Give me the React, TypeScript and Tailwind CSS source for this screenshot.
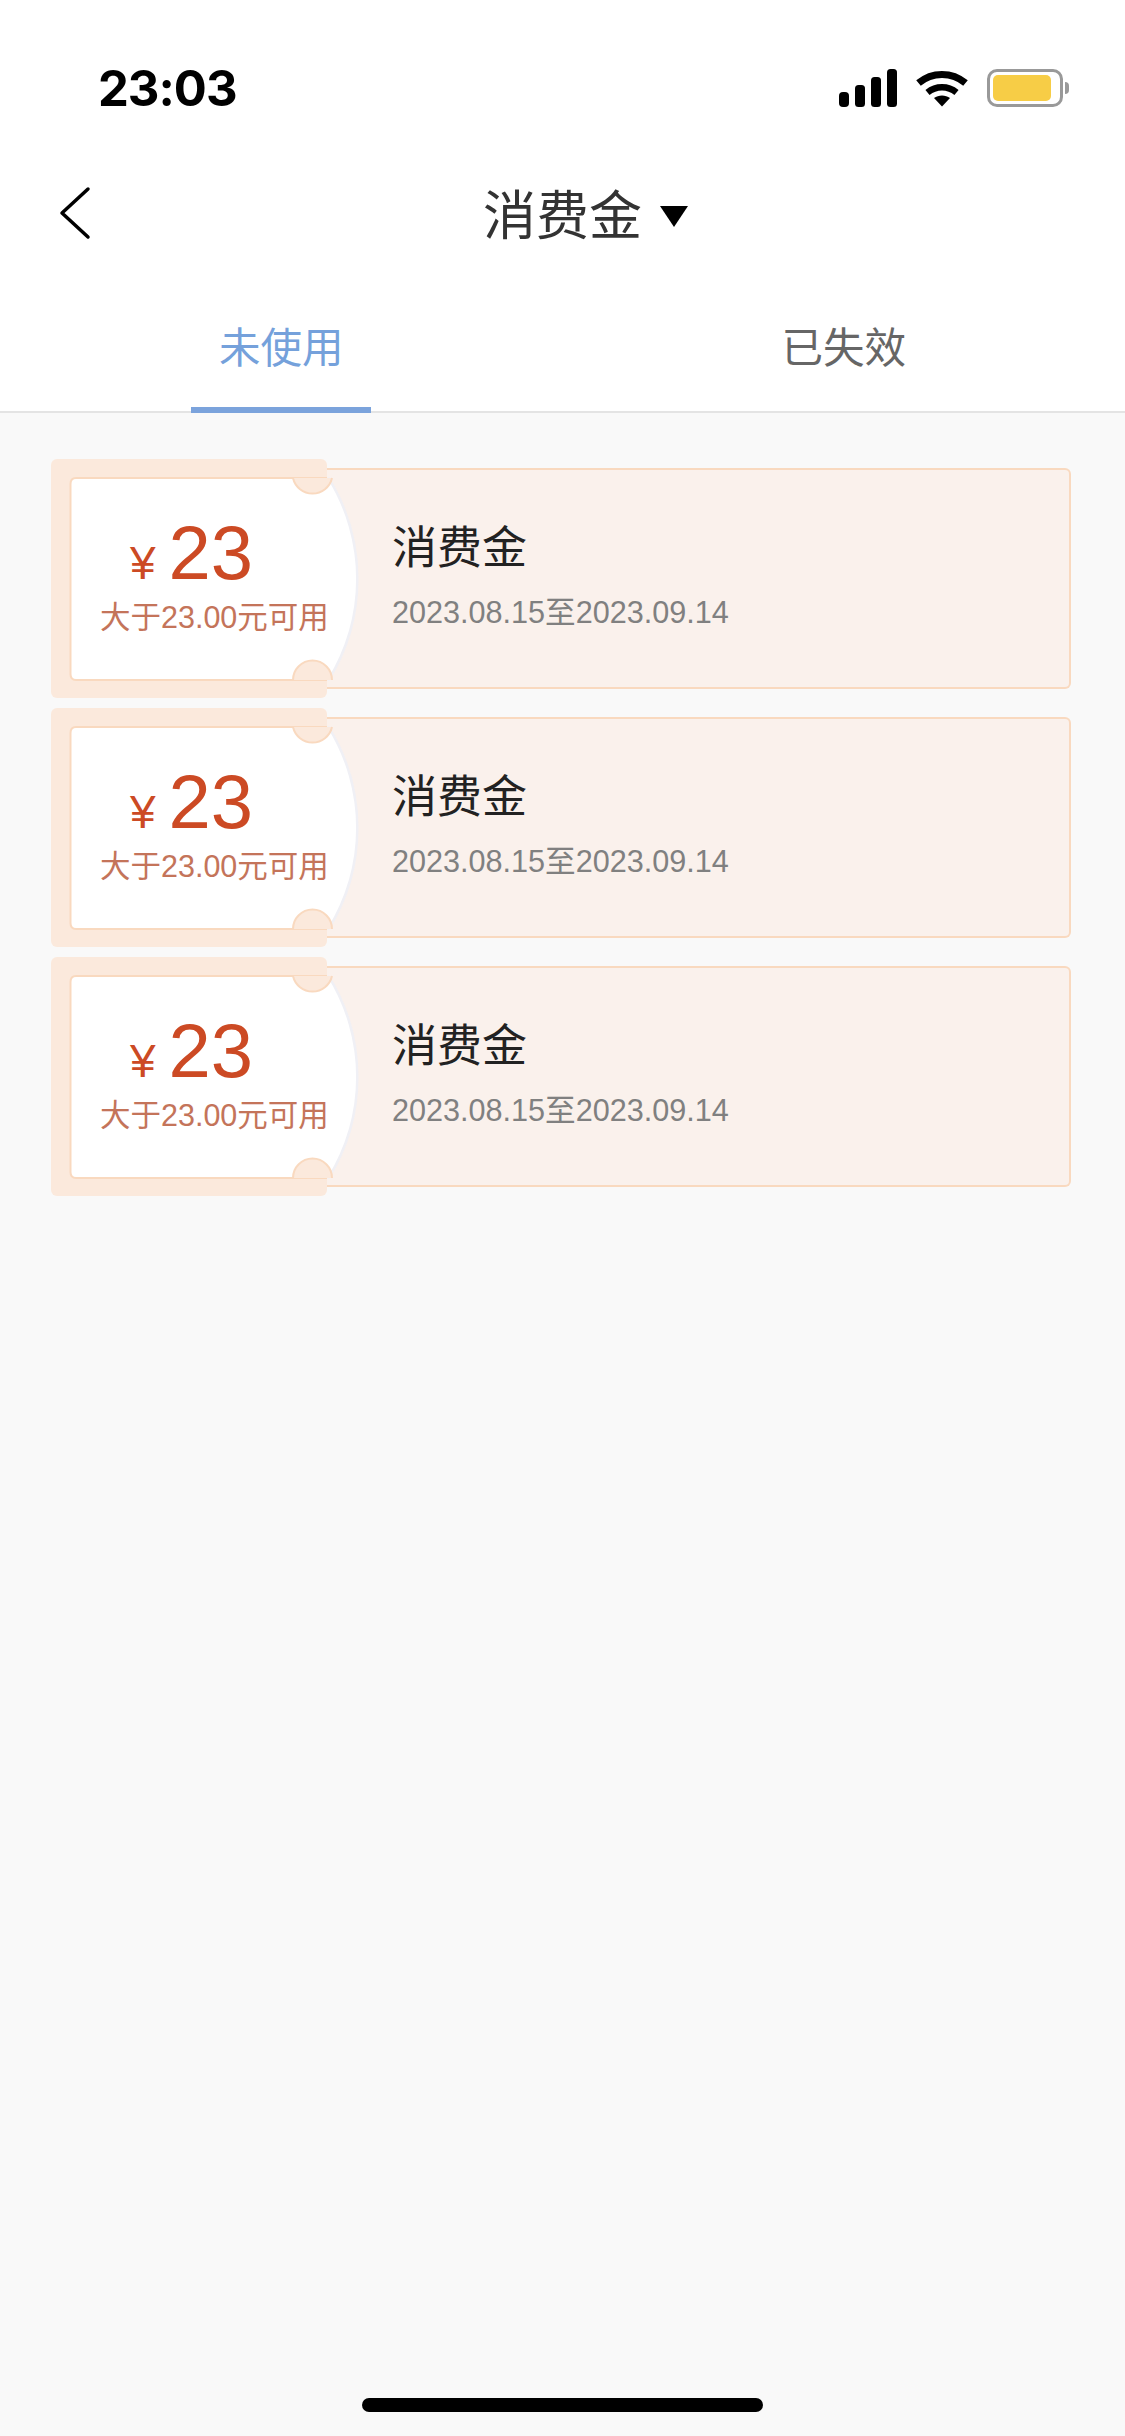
const FONT = "font-['Liberation_Sans','Noto_Sans_CJK_SC',sans-serif]";

// Signal, wifi and battery glyphs at the right of the status bar
function StatusIcons() {
  return (
    <div className="flex items-center">
      <svg width="58" height="38" viewBox="0 0 58 38" className="mr-[19px]">
        <rect x="0" y="23" width="10" height="15" rx="4" fill="#000" />
        <rect x="16" y="16" width="10" height="22" rx="3.5" fill="#000" />
        <rect x="32" y="8" width="10" height="30" rx="3.5" fill="#000" />
        <rect x="48" y="0" width="10" height="38" rx="3.5" fill="#000" />
      </svg>
      <svg width="52" height="38" viewBox="0 0 52 38" className="mr-[19px]">
        <path d="M2.5 14 C16 2.5 36 2.5 49.5 14" fill="none" stroke="#000" strokeWidth="7" />
        <path d="M11.5 23.5 C20 16.5 32 16.5 40.5 23.5" fill="none" stroke="#000" strokeWidth="6.5" />
        <path d="M18 29 C22.5 25.5 29.5 25.5 34 29 L26 37.5 Z" fill="#000" />
      </svg>
      <div className="flex items-center">
        <div className="w-[76px] h-[38px] rounded-[10px] border-[3px] border-[#999999] p-[3px]">
          <div className="w-[58px] h-full rounded-[5px] bg-[#f7cd46]" />
        </div>
        <div className="ml-[2px] w-[4px] h-[12px] rounded-r-[4px] bg-[#999999]" />
      </div>
    </div>
  );
}

function TicketStub() {
  return (
    <svg width="310" height="239" viewBox="0 0 310 239" className="absolute left-0 top-0">
      <rect x="0" y="0" width="276" height="239" rx="6" fill="#fbe9dc" />
      <path d="M276 19 A190 190 0 0 1 276 221" fill="none" stroke="#f0f0f5" strokeWidth="5" />
      <path
        d="M25 19 L276 19 A190 190 0 0 1 276 221 L25 221 Q19.5 221 19.5 215 L19.5 25 Q19.5 19 25 19 Z"
        fill="#ffffff"
      />
      <path
        d="M276 19 L25 19 Q19.5 19 19.5 25 L19.5 215 Q19.5 221 25 221 L276 221"
        fill="none"
        stroke="#f9d9bf"
        strokeWidth="2"
      />
      <path d="M242 19 A20 20 0 0 0 281 19 Z" fill="#fbe9dc" />
      <path d="M242 19 A20 20 0 0 0 281 19" fill="none" stroke="#f9d9bf" strokeWidth="2" />
      <path d="M242 221 A19.5 19.5 0 0 1 281 221 Z" fill="#fbe9dc" />
      <path d="M242 221 A19.5 19.5 0 0 1 281 221" fill="none" stroke="#f9d9bf" strokeWidth="2" />
    </svg>
  );
}

function Coupon() {
  return (
    <div className="flex h-[239px] w-[1020px]">
      <div className="relative z-10 w-[276px] shrink-0">
        <TicketStub />
        <div className="relative flex flex-col items-start pl-[49px] pt-[48px]">
          <div className="flex items-baseline h-[94px] pt-[3px] pl-[30px]">
            <span className="text-[46px] leading-[86px] text-[#cc4a24]">¥</span>
            <span className="ml-[13px] text-[76px] leading-[86px] text-[#cc4a24]">23</span>
          </div>
          <div className="-mt-[4px] text-[30.5px] leading-[40px] whitespace-nowrap text-[#c4745a]">大于23.00元可用</div>
        </div>
      </div>
      <div className="flex-1 my-[9px] rounded-r-[6px] border-2 border-l-0 border-[#f9d9bf] bg-[#faf1ec] pl-[65px] pt-[49px]">
        <div className="text-[45px] leading-[60px] text-[#222222]">消费金</div>
        <div className="mt-[13px] text-[30.6px] leading-[40px] text-[#808080] whitespace-nowrap">2023.08.15至2023.09.14</div>
      </div>
    </div>
  );
}

export default function App() {
  return (
    <div className={`relative w-[1125px] h-[2436px] flex flex-col bg-[#f9f9f9] ${FONT}`}>
      <div className="bg-white">
        <div className="flex h-[150px] items-start justify-between pl-[98px] pr-[56px] pt-[69px]">
          <span className="font-['Inter',sans-serif] font-bold text-[49px] leading-[40px] tracking-[-1px] text-black">23:03</span>
          <StatusIcons />
        </div>
        <div className="relative flex h-[130px] items-center justify-center">
          <svg width="34" height="54" viewBox="0 0 34 54" className="absolute left-[58px] top-[36px]">
            <path d="M30 3 L4 27 L30 51" fill="none" stroke="#000" strokeWidth="3.5" strokeLinecap="round" strokeLinejoin="round" />
          </svg>
          <div className="relative pt-[3px]">
            <span className="text-[53px] leading-[60px] text-[#333333]">消费金</span>
            <span className="absolute left-[177px] top-[22px] w-0 h-0 border-x-[14px] border-x-transparent border-t-[21px] border-t-black" />
          </div>
        </div>
        <div className="flex h-[133px] border-b-2 border-[#e4e4e4]">
          <div className="relative flex-1 flex items-center justify-center pt-[6px]">
            <span className="text-[41.5px] leading-[50px] text-[#75a1db]">未使用</span>
            <div className="absolute left-[191px] bottom-[-2px] w-[180px] h-[6px] bg-[#7ba3dc]" />
          </div>
          <div className="flex-1 flex items-center justify-center pt-[6px]">
            <span className="text-[41.5px] leading-[50px] text-[#666666]">已失效</span>
          </div>
        </div>
      </div>
      <div className="flex flex-col gap-[10px] pl-[51px] pt-[46px]">
        <Coupon />
        <Coupon />
        <Coupon />
      </div>
      <div className="absolute left-[362px] top-[2398px] w-[401px] h-[14px] rounded-full bg-black" />
    </div>
  );
}
